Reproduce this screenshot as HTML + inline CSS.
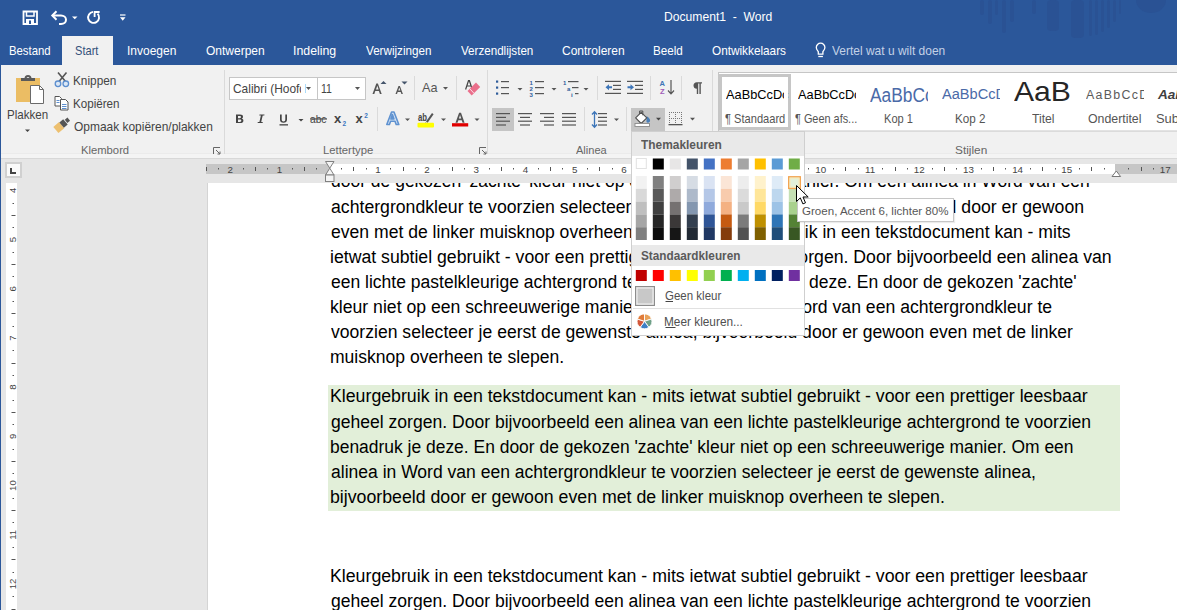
<!DOCTYPE html>
<html><head><meta charset="utf-8"><title>Document1 - Word</title><style>
*{margin:0;padding:0;box-sizing:border-box}
html,body{width:1177px;height:610px;overflow:hidden;background:#e6e6e6;font-family:"Liberation Sans",sans-serif;position:relative}
.a{position:absolute}
.t{position:absolute;white-space:pre;transform-origin:0 0;font-family:"Liberation Sans",sans-serif}
svg{position:absolute;overflow:visible}
.sw{position:absolute;width:11px;height:11px}
.sh{position:absolute;width:11px}
</style></head><body>
<!-- document area -->
<div class="a" style="left:0;top:159px;width:1177px;height:451px;background:#e6e6e6"></div>
<div class="a" style="left:208px;top:183px;width:969px;height:427px;background:#ffffff"></div>
<div class="a" style="left:207px;top:183px;width:1px;height:427px;background:#d4d4d4"></div>
<div class="a" style="left:328px;top:385px;width:792px;height:126px;background:#e2efd9"></div>
<div class="t" style="left:330.70px;top:173.44px;font-size:17.6px;line-height:17.6px;color:#000000;font-weight:normal;transform:scaleX(0.9940)">door de gekozen 'zachte' kleur niet op een schreeuwerige manier. Om een alinea in Word van een</div>
<div class="t" style="left:330.70px;top:198.54px;font-size:17.6px;line-height:17.6px;color:#000000;font-weight:normal;transform:scaleX(1.0039)">achtergrondkleur te voorzien selecteer je eerst de gewenste alinea, bijvoorbeeld door er gewoon</div>
<div class="t" style="left:330.70px;top:223.64px;font-size:17.6px;line-height:17.6px;color:#000000;font-weight:normal;transform:scaleX(0.9990)">even met de linker muisknop overheen te slepen. Kleurgebruik in een tekstdocument kan - mits</div>
<div class="t" style="left:329.70px;top:248.74px;font-size:17.6px;line-height:17.6px;color:#000000;font-weight:normal;transform:scaleX(1.0040)">ietwat subtiel gebruikt - voor een prettiger leesbaar geheel zorgen. Door bijvoorbeeld een alinea van</div>
<div class="t" style="left:330.70px;top:273.84px;font-size:17.6px;line-height:17.6px;color:#000000;font-weight:normal;transform:scaleX(0.9954)">een lichte pastelkleurige achtergrond te voorzien benadruk je deze. En door de gekozen 'zachte'</div>
<div class="t" style="left:329.70px;top:298.94px;font-size:17.6px;line-height:17.6px;color:#000000;font-weight:normal;transform:scaleX(1.0023)">kleur niet op een schreeuwerige manier. Om een alinea in Word van een achtergrondkleur te</div>
<div class="t" style="left:330.70px;top:324.04px;font-size:17.6px;line-height:17.6px;color:#000000;font-weight:normal;transform:scaleX(0.9994)">voorzien selecteer je eerst de gewenste alinea, bijvoorbeeld door er gewoon even met de linker</div>
<div class="t" style="left:329.70px;top:349.14px;font-size:17.6px;line-height:17.6px;color:#000000;font-weight:normal;transform:scaleX(0.9972)">muisknop overheen te slepen.</div>
<div class="t" style="left:329.69px;top:388.44px;font-size:17.6px;line-height:17.6px;color:#000000;font-weight:normal;transform:scaleX(1.0075)">Kleurgebruik in een tekstdocument kan - mits ietwat subtiel gebruikt - voor een prettiger leesbaar</div>
<div class="t" style="left:330.70px;top:413.54px;font-size:17.6px;line-height:17.6px;color:#000000;font-weight:normal;transform:scaleX(0.9976)">geheel zorgen. Door bijvoorbeeld een alinea van een lichte pastelkleurige achtergrond te voorzien</div>
<div class="t" style="left:329.71px;top:438.64px;font-size:17.6px;line-height:17.6px;color:#000000;font-weight:normal;transform:scaleX(0.9913)">benadruk je deze. En door de gekozen 'zachte' kleur niet op een schreeuwerige manier. Om een</div>
<div class="t" style="left:330.70px;top:463.74px;font-size:17.6px;line-height:17.6px;color:#000000;font-weight:normal;transform:scaleX(0.9959)">alinea in Word van een achtergrondkleur te voorzien selecteer je eerst de gewenste alinea,</div>
<div class="t" style="left:329.69px;top:488.84px;font-size:17.6px;line-height:17.6px;color:#000000;font-weight:normal;transform:scaleX(1.0074)">bijvoorbeeld door er gewoon even met de linker muisknop overheen te slepen.</div>
<div class="t" style="left:329.69px;top:567.54px;font-size:17.6px;line-height:17.6px;color:#000000;font-weight:normal;transform:scaleX(1.0075)">Kleurgebruik in een tekstdocument kan - mits ietwat subtiel gebruikt - voor een prettiger leesbaar</div>
<div class="t" style="left:330.70px;top:592.64px;font-size:17.6px;line-height:17.6px;color:#000000;font-weight:normal;transform:scaleX(0.9976)">geheel zorgen. Door bijvoorbeeld een alinea van een lichte pastelkleurige achtergrond te voorzien</div>
<!-- horizontal ruler -->
<div class="a" style="left:2px;top:159px;width:1175px;height:24px;background:#e6e6e6"></div>
<div class="a" style="left:206px;top:164px;width:971px;height:10px;background:#c6c6c6"></div>
<div class="a" style="left:330px;top:164px;width:785px;height:10px;background:#ffffff"></div>
<svg style="left:0;top:155px" width="1177" height="30" viewBox="0 155 1177 30">
<rect x="206" y="167" width="1" height="4" fill="#555555"/>
<rect x="218" y="168" width="1" height="1.5" fill="#555555"/>
<rect x="243" y="168" width="1" height="1.5" fill="#555555"/>
<rect x="255" y="167" width="1" height="4" fill="#555555"/>
<rect x="267" y="168" width="1" height="1.5" fill="#555555"/>
<rect x="292" y="168" width="1" height="1.5" fill="#555555"/>
<rect x="304" y="167" width="1" height="4" fill="#555555"/>
<rect x="316" y="168" width="1" height="1.5" fill="#555555"/>
<rect x="341" y="168" width="1" height="1.5" fill="#555555"/>
<rect x="353" y="167" width="1" height="4" fill="#555555"/>
<rect x="366" y="168" width="1" height="1.5" fill="#555555"/>
<rect x="390" y="168" width="1" height="1.5" fill="#555555"/>
<rect x="403" y="167" width="1" height="4" fill="#555555"/>
<rect x="415" y="168" width="1" height="1.5" fill="#555555"/>
<rect x="439" y="168" width="1" height="1.5" fill="#555555"/>
<rect x="452" y="167" width="1" height="4" fill="#555555"/>
<rect x="464" y="168" width="1" height="1.5" fill="#555555"/>
<rect x="489" y="168" width="1" height="1.5" fill="#555555"/>
<rect x="501" y="167" width="1" height="4" fill="#555555"/>
<rect x="513" y="168" width="1" height="1.5" fill="#555555"/>
<rect x="538" y="168" width="1" height="1.5" fill="#555555"/>
<rect x="550" y="167" width="1" height="4" fill="#555555"/>
<rect x="562" y="168" width="1" height="1.5" fill="#555555"/>
<rect x="587" y="168" width="1" height="1.5" fill="#555555"/>
<rect x="599" y="167" width="1" height="4" fill="#555555"/>
<rect x="612" y="168" width="1" height="1.5" fill="#555555"/>
<rect x="636" y="168" width="1" height="1.5" fill="#555555"/>
<rect x="649" y="167" width="1" height="4" fill="#555555"/>
<rect x="661" y="168" width="1" height="1.5" fill="#555555"/>
<rect x="685" y="168" width="1" height="1.5" fill="#555555"/>
<rect x="698" y="167" width="1" height="4" fill="#555555"/>
<rect x="710" y="168" width="1" height="1.5" fill="#555555"/>
<rect x="735" y="168" width="1" height="1.5" fill="#555555"/>
<rect x="747" y="167" width="1" height="4" fill="#555555"/>
<rect x="759" y="168" width="1" height="1.5" fill="#555555"/>
<rect x="784" y="168" width="1" height="1.5" fill="#555555"/>
<rect x="796" y="167" width="1" height="4" fill="#555555"/>
<rect x="808" y="168" width="1" height="1.5" fill="#555555"/>
<rect x="833" y="168" width="1" height="1.5" fill="#555555"/>
<rect x="845" y="167" width="1" height="4" fill="#555555"/>
<rect x="858" y="168" width="1" height="1.5" fill="#555555"/>
<rect x="882" y="168" width="1" height="1.5" fill="#555555"/>
<rect x="895" y="167" width="1" height="4" fill="#555555"/>
<rect x="907" y="168" width="1" height="1.5" fill="#555555"/>
<rect x="932" y="168" width="1" height="1.5" fill="#555555"/>
<rect x="944" y="167" width="1" height="4" fill="#555555"/>
<rect x="956" y="168" width="1" height="1.5" fill="#555555"/>
<rect x="981" y="168" width="1" height="1.5" fill="#555555"/>
<rect x="993" y="167" width="1" height="4" fill="#555555"/>
<rect x="1005" y="168" width="1" height="1.5" fill="#555555"/>
<rect x="1030" y="168" width="1" height="1.5" fill="#555555"/>
<rect x="1042" y="167" width="1" height="4" fill="#555555"/>
<rect x="1055" y="168" width="1" height="1.5" fill="#555555"/>
<rect x="1079" y="168" width="1" height="1.5" fill="#555555"/>
<rect x="1091" y="167" width="1" height="4" fill="#555555"/>
<rect x="1104" y="168" width="1" height="1.5" fill="#555555"/>
<rect x="1128" y="168" width="1" height="1.5" fill="#555555"/>
<rect x="1141" y="167" width="1" height="4" fill="#555555"/>
<rect x="1153" y="168" width="1" height="1.5" fill="#555555"/>
<text x="230.3" y="172.9" font-size="9.8" fill="#444" text-anchor="middle" font-family="Liberation Sans">2</text>
<text x="279.5" y="172.9" font-size="9.8" fill="#444" text-anchor="middle" font-family="Liberation Sans">1</text>
<text x="377.9" y="172.9" font-size="9.8" fill="#444" text-anchor="middle" font-family="Liberation Sans">1</text>
<text x="427.1" y="172.9" font-size="9.8" fill="#444" text-anchor="middle" font-family="Liberation Sans">2</text>
<text x="476.3" y="172.9" font-size="9.8" fill="#444" text-anchor="middle" font-family="Liberation Sans">3</text>
<text x="525.5" y="172.9" font-size="9.8" fill="#444" text-anchor="middle" font-family="Liberation Sans">4</text>
<text x="574.8" y="172.9" font-size="9.8" fill="#444" text-anchor="middle" font-family="Liberation Sans">5</text>
<text x="624.0" y="172.9" font-size="9.8" fill="#444" text-anchor="middle" font-family="Liberation Sans">6</text>
<text x="673.2" y="172.9" font-size="9.8" fill="#444" text-anchor="middle" font-family="Liberation Sans">7</text>
<text x="722.4" y="172.9" font-size="9.8" fill="#444" text-anchor="middle" font-family="Liberation Sans">8</text>
<text x="771.6" y="172.9" font-size="9.8" fill="#444" text-anchor="middle" font-family="Liberation Sans">9</text>
<text x="820.8" y="172.9" font-size="9.8" fill="#444" text-anchor="middle" font-family="Liberation Sans">10</text>
<text x="870.0" y="172.9" font-size="9.8" fill="#444" text-anchor="middle" font-family="Liberation Sans">11</text>
<text x="919.2" y="172.9" font-size="9.8" fill="#444" text-anchor="middle" font-family="Liberation Sans">12</text>
<text x="968.4" y="172.9" font-size="9.8" fill="#444" text-anchor="middle" font-family="Liberation Sans">13</text>
<text x="1017.6" y="172.9" font-size="9.8" fill="#444" text-anchor="middle" font-family="Liberation Sans">14</text>
<text x="1066.8" y="172.9" font-size="9.8" fill="#444" text-anchor="middle" font-family="Liberation Sans">15</text>
<text x="1165.3" y="172.9" font-size="9.8" fill="#444" text-anchor="middle" font-family="Liberation Sans">17</text>
<path d="M325.5 161.5h8.5l-4.25 6.7l4.25 6.8h-8.5l4.25-6.8z" fill="#f4f4f4" stroke="#808080" stroke-width="1"/>
<rect x="325.5" y="175" width="8.5" height="6.5" fill="#f4f4f4" stroke="#808080" stroke-width="1"/>
<path d="M1112 176.5l4.3-5.5l4.3 5.5z" fill="#fff" stroke="#777" stroke-width="1"/>
</svg>
<!-- vertical ruler -->
<div class="a" style="left:2px;top:159px;width:20px;height:451px;background:#e6e6e6"></div>
<div class="a" style="left:6px;top:183px;width:11px;height:427px;background:#ffffff"></div>
<div class="a" style="left:5px;top:162px;width:17px;height:16px;background:#d0d0d0"></div>
<div class="a" style="left:7px;top:164px;width:13px;height:12px;background:#fafafa"></div>
<div class="a" style="left:10px;top:168px;width:2px;height:6px;background:#444"></div>
<div class="a" style="left:10px;top:172px;width:6px;height:2px;background:#444"></div>
<svg style="left:0;top:180px" width="30" height="430" viewBox="0 180 30 430">
<rect x="12.5" y="203" width="1.5" height="1" fill="#555555"/>
<rect x="11.5" y="215" width="4" height="1" fill="#555555"/>
<rect x="12.5" y="227" width="1.5" height="1" fill="#555555"/>
<rect x="12.5" y="252" width="1.5" height="1" fill="#555555"/>
<rect x="11.5" y="264" width="4" height="1" fill="#555555"/>
<rect x="12.5" y="276" width="1.5" height="1" fill="#555555"/>
<rect x="12.5" y="301" width="1.5" height="1" fill="#555555"/>
<rect x="11.5" y="313" width="4" height="1" fill="#555555"/>
<rect x="12.5" y="326" width="1.5" height="1" fill="#555555"/>
<rect x="12.5" y="350" width="1.5" height="1" fill="#555555"/>
<rect x="11.5" y="363" width="4" height="1" fill="#555555"/>
<rect x="12.5" y="375" width="1.5" height="1" fill="#555555"/>
<rect x="12.5" y="400" width="1.5" height="1" fill="#555555"/>
<rect x="11.5" y="412" width="4" height="1" fill="#555555"/>
<rect x="12.5" y="424" width="1.5" height="1" fill="#555555"/>
<rect x="12.5" y="449" width="1.5" height="1" fill="#555555"/>
<rect x="11.5" y="461" width="4" height="1" fill="#555555"/>
<rect x="12.5" y="473" width="1.5" height="1" fill="#555555"/>
<rect x="12.5" y="498" width="1.5" height="1" fill="#555555"/>
<rect x="11.5" y="510" width="4" height="1" fill="#555555"/>
<rect x="12.5" y="522" width="1.5" height="1" fill="#555555"/>
<rect x="12.5" y="547" width="1.5" height="1" fill="#555555"/>
<rect x="11.5" y="559" width="4" height="1" fill="#555555"/>
<rect x="12.5" y="572" width="1.5" height="1" fill="#555555"/>
<rect x="12.5" y="596" width="1.5" height="1" fill="#555555"/>
<rect x="11.5" y="609" width="4" height="1" fill="#555555"/>
<rect x="12.5" y="621" width="1.5" height="1" fill="#555555"/>
<text transform="translate(16.2 190.4) rotate(-90)" x="0" y="0" font-size="9.6" fill="#444" text-anchor="middle" font-family="Liberation Sans">4</text>
<text transform="translate(16.2 239.6) rotate(-90)" x="0" y="0" font-size="9.6" fill="#444" text-anchor="middle" font-family="Liberation Sans">5</text>
<text transform="translate(16.2 288.8) rotate(-90)" x="0" y="0" font-size="9.6" fill="#444" text-anchor="middle" font-family="Liberation Sans">6</text>
<text transform="translate(16.2 338.0) rotate(-90)" x="0" y="0" font-size="9.6" fill="#444" text-anchor="middle" font-family="Liberation Sans">7</text>
<text transform="translate(16.2 387.2) rotate(-90)" x="0" y="0" font-size="9.6" fill="#444" text-anchor="middle" font-family="Liberation Sans">8</text>
<text transform="translate(16.2 436.4) rotate(-90)" x="0" y="0" font-size="9.6" fill="#444" text-anchor="middle" font-family="Liberation Sans">9</text>
<text transform="translate(16.2 485.6) rotate(-90)" x="0" y="0" font-size="9.6" fill="#444" text-anchor="middle" font-family="Liberation Sans">10</text>
<text transform="translate(16.2 534.8) rotate(-90)" x="0" y="0" font-size="9.6" fill="#444" text-anchor="middle" font-family="Liberation Sans">11</text>
<text transform="translate(16.2 584.0) rotate(-90)" x="0" y="0" font-size="9.6" fill="#444" text-anchor="middle" font-family="Liberation Sans">12</text>
</svg>
<!-- title bar + tabs -->
<div class="a" style="left:0;top:0;width:1177px;height:66px;background:#2b579a"></div>
<svg style="left:0;top:0" width="1177" height="40" viewBox="0 0 1177 40">
<g fill="#2a5294">
 <rect x="980" y="0" width="4" height="15" rx="2"/>
 <rect x="988" y="0" width="4" height="24" rx="2"/>
 <rect x="995" y="0" width="3" height="15" rx="1.5"/>
 <rect x="1002" y="0" width="4" height="33" rx="2"/>
 <rect x="1010" y="0" width="4" height="22" rx="2"/>
 <rect x="1032" y="0" width="4" height="14" rx="2"/>
 <rect x="1047" y="0" width="12" height="31" rx="4"/>
 <rect x="1071" y="0" width="13" height="38" rx="4"/>
 <rect x="1089" y="0" width="3" height="36" rx="1.5"/>
 <rect x="1095" y="0" width="3" height="35" rx="1.5"/>
 <rect x="1101" y="0" width="3" height="32" rx="1.5"/>
 <rect x="1107" y="0" width="3" height="28" rx="1.5"/>
 <rect x="1113" y="0" width="3" height="22" rx="1.5"/>
 <rect x="1119" y="0" width="2" height="14" rx="1"/>
 <path d="M1136 0a15 13 0 0 0 30 0z"/>
</g>
</svg>

<!-- ribbon -->
<div class="a" style="left:1px;top:65px;width:1176px;height:93px;background:#f1f1f1"></div>
<div class="a" style="left:1px;top:153px;width:1176px;height:1px;background:#ebebeb"></div>
<div class="a" style="left:1px;top:154px;width:1176px;height:4px;background:#f4f4f4"></div>
<div class="a" style="left:1px;top:158px;width:1176px;height:1px;background:#d8d8d8"></div>
<div class="a" style="left:62px;top:36px;width:51px;height:30px;background:#f1f1f1"></div>
<!-- left window border -->
<div class="a" style="left:0;top:0;width:1px;height:610px;background:#2b579a"></div>
<svg style="left:0;top:0" width="1177" height="160" viewBox="0 0 1177 160">
<!-- QAT -->
<g fill="none" stroke="#fff">
 <path d="M23.5 11.5h13.5v12.5h-13.5z" stroke-width="1.8"/>
 <path d="M26.5 11.5v4.5h7.5v-4.5" stroke-width="1.5"/>
 <path d="M52.5 15.5h8.5c3 0 5 2 5 4.3c0 2.3-2 4.2-5 4.2h-2" stroke-width="2"/>
 <path d="M56.5 11.3l-4.2 4.2l4.2 4.2" stroke-width="2"/>
 <path d="M97.6 13.6a5.5 5.5 0 1 1 -4.6 -1.7" stroke-width="1.9"/>
 <path d="M94.6 17V12h5" stroke-width="1.8"/>
 <path d="M120 15h5.5" stroke-width="1.2"/>
 <path d="M816.3 47.5a4.3 4.3 0 1 1 8.6 0c0 2-1.2 3-2 4.2v2.5h-4.6v-2.5c-0.8-1.2-2-2.2-2-4.2z" stroke-width="1.3"/>
 <path d="M818.3 56.5h4.6" stroke-width="1.3"/>
</g>
<g fill="#fff">
 <path d="M26 19h8v5h-8z"/>
 
 <path d="M72 16.5h5.5l-2.75 2.8z"/>
 <path d="M120 17.3h5.5l-2.75 3.5z"/>
</g>
<path d="M29 20.5h2v3.5h-2z" fill="#2b579a"/>
<!-- Clipboard / Plakken -->
<path d="M16 78h24v24h-24z" fill="#ebbd64"/>
<path d="M21 78h14v3h-14z" fill="#5a5a5a"/>
<path d="M25.5 78.5a2.5 2.5 0 0 1 5 0" fill="none" stroke="#5a5a5a" stroke-width="2"/>
<path d="M30.5 85.5h9l4 4v14h-13z" fill="#fff" stroke="#6a6a6a" stroke-width="1"/>
<path d="M39.5 85.5v4h4" fill="none" stroke="#6a6a6a" stroke-width="1"/>
<path d="M25 129.5h5l-2.5 2.5z" fill="#444"/>
<!-- scissors -->
<path d="M58 72.5l7.5 9M66.5 72.5l-7.5 9" stroke="#555" stroke-width="1.6" fill="none"/>
<circle cx="58" cy="83.8" r="2.8" fill="#dbe7f5" stroke="#5d8fcf" stroke-width="1.3"/>
<circle cx="65.8" cy="83.8" r="2.8" fill="#dbe7f5" stroke="#5d8fcf" stroke-width="1.3"/>
<!-- copy -->
<path d="M55 96.5h4.5l2 2v7.5h-6.5z" fill="#fff" stroke="#555" stroke-width="1"/>
<path d="M60.5 99.5h5l2.5 2.5v8h-7.5z" fill="#fff" stroke="#555" stroke-width="1"/>
<path d="M56.5 100.5h3M56.5 102.5h3M62 104.5h4.5M62 106.5h4.5M62 108.5h4.5" stroke="#5d8fcf" stroke-width="1"/>
<!-- brush -->
<g transform="rotate(-40 62 124.8)">
 <rect x="54" y="120.8" width="7.5" height="8" fill="#edc070"/>
 <rect x="61.5" y="121.3" width="5" height="7" fill="#555"/>
 <rect x="67.3" y="122.8" width="3.5" height="4" fill="#555"/>
</g>
<!-- group separators -->
<g fill="#dadada">
 <rect x="224" y="70" width="1" height="84"/>
 <rect x="487" y="70" width="1" height="84"/>
 <rect x="712" y="70" width="1" height="84"/>
 <rect x="414" y="76" width="1" height="24"/>
 <rect x="456" y="76" width="1" height="24"/>
 <rect x="377" y="107" width="1" height="24"/>
 <rect x="597" y="76" width="1" height="24"/>
 <rect x="650" y="76" width="1" height="24"/>
 <rect x="681" y="76" width="1" height="24"/>
 <rect x="584" y="107" width="1" height="24"/>
 <rect x="626" y="107" width="1" height="24"/>
</g>
<!-- dialog launchers -->
<g fill="none" stroke="#666" stroke-width="1">
 <path d="M213.5 154v-6.5h6.5M216 150l4 4M220 151.5v2.5h-2.5"/>
 <path d="M479.5 154v-6.5h6.5M482 150l4 4M486 151.5v2.5h-2.5"/>
 <path d="M704.5 154v-6.5h6.5M707 150l4 4M711 151.5v2.5h-2.5"/>
</g>
<!-- font name / size boxes -->
<rect x="229.5" y="77.5" width="88" height="22" fill="#fff" stroke="#c6c6c6"/>
<rect x="317.5" y="77.5" width="48" height="22" fill="#fff" stroke="#c6c6c6"/>
<g fill="#555">
 <path d="M306 87h5l-2.5 3z"/>
 <path d="M355 87h5l-2.5 3z"/>
</g>
<!-- styles gallery -->
<rect x="718.5" y="72.5" width="470" height="58.5" fill="#fff" stroke="#c6c6c6"/>
<rect x="720.5" y="75.5" width="69" height="53" fill="none" stroke="#c6c6c6" stroke-width="3"/>
<!-- font grow/shrink -->
<g fill="#555">
 <path d="M372.5 94l3.8-10.5h1.6l3.8 10.5h-1.8l-1-2.9h-3.6l-1 2.9zM376 89.6h2.6l-1.3-3.9z"/>
 <path d="M395.5 94l3-8h1.4l3 8h-1.5l-0.7-2.1h-3l-0.7 2.1zM398.3 90.6h2l-1-3z"/>
</g>
<g fill="#44546a">
 <path d="M380.5 84h6l-3-3z"/>
 <path d="M401.5 81.5h6l-3 3z"/>
</g>
<!-- Aa -->
<text x="422" y="92.4" font-family="Liberation Sans" font-size="12.8" fill="#555" textLength="15.5" lengthAdjust="spacingAndGlyphs">Aa</text>
<path d="M443 87h5l-2.5 2.8z" fill="#555"/>
<!-- clear formatting -->
<path d="M465.6 89.5l2.9-8.8h0.9l2.9 8.8M467 86h4" fill="none" stroke="#444" stroke-width="1.2"/>
<path d="M476 82.5l4.2 4.5l-8.5 8.5l-4.2-4.5z" fill="#ea6f8b"/>
<path d="M467.8 90.8l4 4.3" stroke="#f2f2f2" stroke-width="0" />
<path d="M469.8 88.8l4.2 4.5" stroke="#fbe0e6" stroke-width="1"/>
<!-- B I U abc x2 x2 -->
<g fill="#444">
 <path d="M236 114.5h4c2 0 3 0.9 3 2.2c0 1-0.6 1.6-1.4 1.9c1.1 0.2 1.8 1 1.8 2.1c0 1.6-1.2 2.3-3.2 2.3h-4.2zM238 116v2.2h1.6c0.9 0 1.4-0.4 1.4-1.1s-0.5-1.1-1.4-1.1zM238 119.6v2.3h1.8c1 0 1.5-0.4 1.5-1.15s-0.5-1.15-1.5-1.15z"/>
 <path d="M259.5 114.5h5l-0.2 1h-1.6l-1.5 6.5h1.6l-0.2 1h-5l0.2-1h1.6l1.5-6.5h-1.6z"/>
 <path d="M280 114.5h1.7v5c0 1.2 0.6 1.9 1.8 1.9s1.8-0.7 1.8-1.9v-5h1.7v5c0 2.2-1.3 3.3-3.5 3.3s-3.5-1.1-3.5-3.3z"/>
 <rect x="279.5" y="124.2" width="8.5" height="1.3"/>
 <path d="M298.5 119h5l-2.5 2.5z"/>
 
 
</g>
<text x="310" y="122.5" font-family="Liberation Sans" font-size="11" fill="#444" textLength="16.5" lengthAdjust="spacingAndGlyphs">abc</text>
<rect x="310" y="118.3" width="17" height="1.3" fill="#555"/>
<text x="334" y="123" font-family="Liberation Sans" font-size="13" fill="#444" font-weight="bold">x</text><text x="342.6" y="125.5" font-family="Liberation Sans" font-size="6.5" fill="#3b75c0" font-weight="bold">2</text>
<text x="355.5" y="123" font-family="Liberation Sans" font-size="13" fill="#444" font-weight="bold">x</text><text x="364.2" y="117.5" font-family="Liberation Sans" font-size="6.5" fill="#3b75c0" font-weight="bold">2</text>
<!-- text effects A -->
<path d="M386.8 124.5l4.8-12.5h2.4l4.8 12.5h-2.6l-1.2-3.3h-4.4l-1.2 3.3zM390.9 118.9h3l-1.5-4.4z" fill="#d6e4f5" stroke="#5f92d0" stroke-width="1.6" stroke-linejoin="round"/>
<path d="M405 118.5h5l-2.5 2.5z" fill="#555"/>
<!-- highlighter -->
<text x="418" y="120.5" font-family="Liberation Sans" font-size="10" font-weight="bold" fill="#444" textLength="9" lengthAdjust="spacingAndGlyphs">ab</text>
<path d="M426 121.5l6-8.5l1.6 1.2l-6 8.5z" fill="#555"/>
<path d="M425.5 122.2l1.8 1.3l-2.4 0.7z" fill="#555"/>
<rect x="417.5" y="122.7" width="16.5" height="4.8" rx="1" fill="#ffff00"/>
<path d="M441 118.5h5l-2.5 2.5z" fill="#555"/>
<!-- font color -->
<path d="M455.5 122.8l3.6-10h1.9l3.6 10h-2l-0.9-2.6h-3.3l-0.9 2.6zM458.9 118.6h2.3l-1.15-3.5z" fill="#555"/>
<rect x="452" y="123.2" width="16.2" height="3.3" fill="#e00000"/>
<path d="M474.5 118.5h5l-2.5 2.5z" fill="#555"/>
<!-- paragraph row 1 -->
<g fill="#2e5c9a">
 <rect x="496" y="80.5" width="2.2" height="2.2"/><rect x="496" y="86.5" width="2.2" height="2.2"/><rect x="496" y="92.5" width="2.2" height="2.2"/>
</g>
<g fill="#555">
 <rect x="501" y="81" width="8" height="1.2"/><rect x="501" y="87" width="8" height="1.2"/><rect x="501" y="93" width="8" height="1.2"/>
 <path d="M517.5 88h5l-2.5 2.5z"/>
 <rect x="535" y="81" width="9" height="1.2"/><rect x="535" y="87" width="9" height="1.2"/><rect x="535" y="93" width="9" height="1.2"/>
 <path d="M551.5 88h5l-2.5 2.5z"/>
 <rect x="568" y="81" width="10.5" height="1.2"/><rect x="572" y="87" width="6.5" height="1.2"/><rect x="575" y="93" width="3.5" height="1.2"/>
 <path d="M583.5 88h5l-2.5 2.5z"/>
</g>
<g font-family="Liberation Sans" font-size="6" font-weight="bold" fill="#2e5c9a">
 <text x="529.5" y="84.5">1</text><text x="529.5" y="90.5">2</text><text x="529.5" y="96.5">3</text>
 <text x="563" y="84.5">1</text><text x="567" y="90.5">a</text><text x="571" y="96.5">i</text>
</g>
<!-- indent -->
<g fill="#555">
 <rect x="605" y="80.8" width="16" height="1.2"/><rect x="613" y="84.8" width="8" height="1.2"/><rect x="613" y="88.8" width="8" height="1.2"/><rect x="605" y="92.8" width="16" height="1.2"/>
 <rect x="627" y="80.8" width="16" height="1.2"/><rect x="635" y="84.8" width="8" height="1.2"/><rect x="635" y="88.8" width="8" height="1.2"/><rect x="627" y="92.8" width="16" height="1.2"/>
</g>
<g fill="#3d75b8">
 <path d="M605.5 87.3l3.5-3v2h3v2h-3v2z"/>
 <path d="M634 87.3l-3.5-3v2h-3v2h3v2z"/>
</g>
<!-- sort -->
<text x="659.5" y="86.2" font-family="Liberation Sans" font-size="7.5" font-weight="bold" fill="#3d75b8">A</text>
<text x="660" y="94.3" font-family="Liberation Sans" font-size="7.5" font-weight="bold" fill="#a05bb8">Z</text>
<path d="M671 80v13.5M668 90.5l3 3.3l3-3.3" fill="none" stroke="#555" stroke-width="1.2"/>
<!-- pilcrow -->
<path d="M696 82.2h6v1.3h-1.2v10.5h-1.4v-10.5h-1.2v10.5h-1.4v-5.2c-2 0-3.3-1.3-3.3-3.3s1.3-3.3 3.3-3.3z" fill="#555"/>
<!-- paragraph row 2 -->
<rect x="492" y="108" width="22" height="23" fill="#c5c5c5"/>
<g fill="#555">
 <rect x="496" y="113" width="14" height="1.2"/><rect x="496" y="116.8" width="10" height="1.2"/><rect x="496" y="120.6" width="14" height="1.2"/><rect x="496" y="124.4" width="10" height="1.2"/>
 <rect x="518" y="113" width="14" height="1.2"/><rect x="520" y="116.8" width="10" height="1.2"/><rect x="518" y="120.6" width="14" height="1.2"/><rect x="520" y="124.4" width="10" height="1.2"/>
 <rect x="540" y="113" width="14" height="1.2"/><rect x="544" y="116.8" width="10" height="1.2"/><rect x="540" y="120.6" width="14" height="1.2"/><rect x="544" y="124.4" width="10" height="1.2"/>
 <rect x="562" y="113" width="14" height="1.2"/><rect x="562" y="116.8" width="14" height="1.2"/><rect x="562" y="120.6" width="14" height="1.2"/><rect x="562" y="124.4" width="14" height="1.2"/>
 <rect x="598" y="113" width="9" height="1.2"/><rect x="598" y="116.8" width="9" height="1.2"/><rect x="598" y="120.6" width="9" height="1.2"/><rect x="598" y="124.4" width="9" height="1.2"/>
 <path d="M614 118.5h5l-2.5 2.5z"/>
</g>
<path d="M594.5 112v15M592 114.5l2.5-2.8l2.5 2.8M592 124.5l2.5 2.8l2.5-2.8" fill="none" stroke="#3d75b8" stroke-width="1.3"/>
<!-- shading button -->
<rect x="631" y="108" width="34" height="24" fill="#c5c5c5"/>
<path d="M646.5 116.2c2.2 1 3.6 2.6 3.6 4.3c0 1.3-1 2.2-2.2 2.2c-0.6 0-1-0.3-1.4-0.6z" fill="#4a7fb8"/>
<path d="M641.2 112.3l5.6 5.6l-5.6 5.6l-5.6-5.6z" fill="#fff" stroke="#505050" stroke-width="1.1" stroke-linejoin="round"/>
<path d="M639.6 114v-3h3.2v4.3" fill="none" stroke="#505050" stroke-width="1"/>
<rect x="635" y="123.5" width="14.5" height="3" fill="#fff" stroke="#8a8a8a" stroke-width="0.9"/>
<path d="M656 117.8h5l-2.5 2.8z" fill="#444"/>
<!-- borders -->
<g fill="#777">
<rect x="669" y="112" width="1" height="1"/><rect x="669" y="118" width="1" height="1"/><rect x="671" y="112" width="1" height="1"/><rect x="671" y="118" width="1" height="1"/><rect x="673" y="112" width="1" height="1"/><rect x="673" y="118" width="1" height="1"/><rect x="675" y="112" width="1" height="1"/><rect x="675" y="118" width="1" height="1"/><rect x="677" y="112" width="1" height="1"/><rect x="677" y="118" width="1" height="1"/><rect x="679" y="112" width="1" height="1"/><rect x="679" y="118" width="1" height="1"/><rect x="681" y="112" width="1" height="1"/><rect x="681" y="118" width="1" height="1"/><rect x="669" y="112" width="1" height="1"/><rect x="675" y="112" width="1" height="1"/><rect x="681" y="112" width="1" height="1"/><rect x="669" y="114" width="1" height="1"/><rect x="675" y="114" width="1" height="1"/><rect x="681" y="114" width="1" height="1"/><rect x="669" y="116" width="1" height="1"/><rect x="675" y="116" width="1" height="1"/><rect x="681" y="116" width="1" height="1"/><rect x="669" y="118" width="1" height="1"/><rect x="675" y="118" width="1" height="1"/><rect x="681" y="118" width="1" height="1"/><rect x="669" y="120" width="1" height="1"/><rect x="675" y="120" width="1" height="1"/><rect x="681" y="120" width="1" height="1"/><rect x="669" y="122" width="1" height="1"/><rect x="675" y="122" width="1" height="1"/><rect x="681" y="122" width="1" height="1"/>
</g>
<rect x="668.5" y="124" width="14" height="1.3" fill="#555"/>
<path d="M690 117.8h5l-2.5 2.8z" fill="#555"/>
</svg>

<div class="t" style="left:664.14px;top:11.09px;font-size:12.6px;line-height:12.6px;color:#ffffff;font-weight:normal;transform:scaleX(0.9637)">Document1  -  Word</div>
<div class="t" style="left:8.78px;top:44.86px;font-size:12.4px;line-height:12.4px;color:#ffffff;font-weight:normal;transform:scaleX(0.9153)">Bestand</div>
<div class="t" style="left:75.00px;top:44.86px;font-size:12.4px;line-height:12.4px;color:#33507a;font-weight:normal;transform:scaleX(0.8943)">Start</div>
<div class="t" style="left:127.03px;top:44.86px;font-size:12.4px;line-height:12.4px;color:#ffffff;font-weight:normal;transform:scaleX(0.9682)">Invoegen</div>
<div class="t" style="left:206.00px;top:44.86px;font-size:12.4px;line-height:12.4px;color:#ffffff;font-weight:normal;transform:scaleX(0.9684)">Ontwerpen</div>
<div class="t" style="left:292.70px;top:44.86px;font-size:12.4px;line-height:12.4px;color:#ffffff;font-weight:normal;transform:scaleX(0.9950)">Indeling</div>
<div class="t" style="left:365.80px;top:44.86px;font-size:12.4px;line-height:12.4px;color:#ffffff;font-weight:normal;transform:scaleX(0.9415)">Verwijzingen</div>
<div class="t" style="left:460.80px;top:44.86px;font-size:12.4px;line-height:12.4px;color:#ffffff;font-weight:normal;transform:scaleX(0.9372)">Verzendlijsten</div>
<div class="t" style="left:561.80px;top:44.86px;font-size:12.4px;line-height:12.4px;color:#ffffff;font-weight:normal;transform:scaleX(0.9684)">Controleren</div>
<div class="t" style="left:652.76px;top:44.86px;font-size:12.4px;line-height:12.4px;color:#ffffff;font-weight:normal;transform:scaleX(0.9416)">Beeld</div>
<div class="t" style="left:712.00px;top:44.86px;font-size:12.4px;line-height:12.4px;color:#ffffff;font-weight:normal;transform:scaleX(0.9508)">Ontwikkelaars</div>
<div class="t" style="left:832.00px;top:44.86px;font-size:12.4px;line-height:12.4px;color:#c3d1e6;font-weight:normal;transform:scaleX(0.9668)">Vertel wat u wilt doen</div>
<div class="t" style="left:6.50px;top:108.62px;font-size:12.8px;line-height:12.8px;color:#444444;font-weight:normal;transform:scaleX(0.9030)">Plakken</div>
<div class="t" style="left:72.88px;top:75.22px;font-size:12.8px;line-height:12.8px;color:#444444;font-weight:normal;transform:scaleX(0.9226)">Knippen</div>
<div class="t" style="left:72.89px;top:98.12px;font-size:12.8px;line-height:12.8px;color:#444444;font-weight:normal;transform:scaleX(0.9080)">Kopiëren</div>
<div class="t" style="left:73.80px;top:121.02px;font-size:12.8px;line-height:12.8px;color:#444444;font-weight:normal;transform:scaleX(0.9337)">Opmaak kopiëren/plakken</div>
<div class="t" style="left:80.60px;top:145.28px;font-size:11.2px;line-height:11.2px;color:#666666;font-weight:normal;transform:scaleX(1.0051)">Klembord</div>
<div class="t" style="left:322.60px;top:145.28px;font-size:11.2px;line-height:11.2px;color:#666666;font-weight:normal;transform:scaleX(1.0095)">Lettertype</div>
<div class="t" style="left:576.00px;top:145.28px;font-size:11.2px;line-height:11.2px;color:#666666;font-weight:normal;transform:scaleX(0.9882)">Alinea</div>
<div class="t" style="left:955.00px;top:145.28px;font-size:11.2px;line-height:11.2px;color:#666666;font-weight:normal;transform:scaleX(1.0579)">Stijlen</div>
<div class="t" style="left:232.90px;top:83.26px;font-size:12.4px;line-height:12.4px;color:#444444;font-weight:normal;transform:scaleX(0.9637)">Calibri (Hoofd</div>
<div class="t" style="left:320.50px;top:82.86px;font-size:12.4px;line-height:12.4px;color:#444444;font-weight:normal;transform:scaleX(0.8481)">11</div>
<div class="t" style="left:725.80px;top:88.79px;font-size:12.6px;line-height:12.6px;color:#000000;font-weight:normal;transform:scaleX(1.0148)">AaBbCcDc</div>
<div class="t" style="left:724.60px;top:112.76px;font-size:12.4px;line-height:12.4px;color:#555555;font-weight:normal;transform:scaleX(0.8963)">¶ Standaard</div>
<div class="t" style="left:797.80px;top:88.79px;font-size:12.6px;line-height:12.6px;color:#000000;font-weight:normal;transform:scaleX(1.0148)">AaBbCcDc</div>
<div class="t" style="left:795.30px;top:112.76px;font-size:12.4px;line-height:12.4px;color:#555555;font-weight:normal;transform:scaleX(0.8795)">¶ Geen afs...</div>
<div class="t" style="left:870.30px;top:85.10px;font-size:20px;line-height:20px;color:#4a6aa8;font-weight:normal;transform:scaleX(0.8682)">AaBbCc</div>
<div class="t" style="left:883.60px;top:112.76px;font-size:12.4px;line-height:12.4px;color:#555555;font-weight:normal;transform:scaleX(0.8955)">Kop 1</div>
<div class="t" style="left:942.10px;top:86.22px;font-size:15.5px;line-height:15.5px;color:#4a6aa8;font-weight:normal;transform:scaleX(0.9416)">AaBbCcD</div>
<div class="t" style="left:955.46px;top:112.76px;font-size:12.4px;line-height:12.4px;color:#555555;font-weight:normal;transform:scaleX(0.9400)">Kop 2</div>
<div class="t" style="left:1014.00px;top:78.12px;font-size:27.5px;line-height:27.5px;color:#262626;font-weight:normal;transform:scaleX(1.0960)">AaB</div>
<div class="t" style="left:1031.80px;top:112.76px;font-size:12.4px;line-height:12.4px;color:#555555;font-weight:normal;transform:scaleX(0.9822)">Titel</div>
<div class="t" style="letter-spacing:1.3px;left:1085.90px;top:88.77px;font-size:12.5px;line-height:12.5px;color:#5a5a5a;font-weight:normal;transform:scaleX(0.9911)">AaBbCcD</div>
<div class="t" style="left:1088.30px;top:112.76px;font-size:12.4px;line-height:12.4px;color:#555555;font-weight:normal;transform:scaleX(0.9950)">Ondertitel</div>
<div class="t" style="font-style:italic;left:1158.30px;top:88.35px;font-size:13px;line-height:13px;color:#404040;font-weight:bold;transform:scaleX(1.0422)">AaB</div>
<div class="t" style="left:1156.20px;top:112.76px;font-size:12.4px;line-height:12.4px;color:#555555;font-weight:normal;transform:scaleX(1.0426)">Subtiele</div>
<div class="a" style="left:1008px;top:73px;width:70px;height:8.5px;background:#fff"></div>
<div class="a" style="left:784px;top:80px;width:4px;height:24px;background:#fff"></div>
<div class="a" style="left:301px;top:79px;width:4px;height:19px;background:#fff"></div>
<div class="a" style="left:856px;top:80px;width:8px;height:24px;background:#fff"></div>
<div class="a" style="left:928px;top:80px;width:8px;height:24px;background:#fff"></div>
<div class="a" style="left:1000px;top:80px;width:8px;height:24px;background:#fff"></div>
<div class="a" style="left:1144px;top:80px;width:8px;height:24px;background:#fff"></div>
<div class="a" style="left:631px;top:131px;width:174px;height:205px;background:#fff;border:1px solid #cfcfcf"></div>
<div class="a" style="left:632px;top:132px;width:172px;height:24px;background:#e9e9e9"></div>
<div class="a" style="left:632px;top:245px;width:172px;height:21px;background:#e9e9e9"></div>
<svg style="left:0;top:0" width="1177" height="610" viewBox="0 0 1177 610">
<rect x="636.3" y="158.5" width="10" height="10" fill="#FFFFFF" stroke="#e2e2e2"/>
<rect x="635.8" y="176.0" width="11" height="12.8" fill="#F2F2F2"/>
<rect x="635.8" y="188.8" width="11" height="12.8" fill="#D9D9D9"/>
<rect x="635.8" y="201.6" width="11" height="12.8" fill="#BFBFBF"/>
<rect x="635.8" y="214.4" width="11" height="12.8" fill="#A6A6A6"/>
<rect x="635.8" y="227.2" width="11" height="12.8" fill="#808080"/>
<rect x="652.8" y="158.5" width="11" height="11" fill="#000000"/>
<rect x="652.8" y="176.0" width="11" height="12.8" fill="#808080"/>
<rect x="652.8" y="188.8" width="11" height="12.8" fill="#595959"/>
<rect x="652.8" y="201.6" width="11" height="12.8" fill="#404040"/>
<rect x="652.8" y="214.4" width="11" height="12.8" fill="#262626"/>
<rect x="652.8" y="227.2" width="11" height="12.8" fill="#0D0D0D"/>
<rect x="669.8" y="158.5" width="11" height="11" fill="#E7E6E6"/>
<rect x="669.8" y="176.0" width="11" height="12.8" fill="#D0CECE"/>
<rect x="669.8" y="188.8" width="11" height="12.8" fill="#AEAAAA"/>
<rect x="669.8" y="201.6" width="11" height="12.8" fill="#757171"/>
<rect x="669.8" y="214.4" width="11" height="12.8" fill="#3B3838"/>
<rect x="669.8" y="227.2" width="11" height="12.8" fill="#161616"/>
<rect x="686.8" y="158.5" width="11" height="11" fill="#44546A"/>
<rect x="686.8" y="176.0" width="11" height="12.8" fill="#D6DCE4"/>
<rect x="686.8" y="188.8" width="11" height="12.8" fill="#ADB9CA"/>
<rect x="686.8" y="201.6" width="11" height="12.8" fill="#8497B0"/>
<rect x="686.8" y="214.4" width="11" height="12.8" fill="#333F4F"/>
<rect x="686.8" y="227.2" width="11" height="12.8" fill="#222A35"/>
<rect x="703.8" y="158.5" width="11" height="11" fill="#4472C4"/>
<rect x="703.8" y="176.0" width="11" height="12.8" fill="#DAE3F3"/>
<rect x="703.8" y="188.8" width="11" height="12.8" fill="#B4C7E7"/>
<rect x="703.8" y="201.6" width="11" height="12.8" fill="#8FAADC"/>
<rect x="703.8" y="214.4" width="11" height="12.8" fill="#2F5597"/>
<rect x="703.8" y="227.2" width="11" height="12.8" fill="#203864"/>
<rect x="720.8" y="158.5" width="11" height="11" fill="#ED7D31"/>
<rect x="720.8" y="176.0" width="11" height="12.8" fill="#FBE5D6"/>
<rect x="720.8" y="188.8" width="11" height="12.8" fill="#F8CBAD"/>
<rect x="720.8" y="201.6" width="11" height="12.8" fill="#F4B183"/>
<rect x="720.8" y="214.4" width="11" height="12.8" fill="#C55A11"/>
<rect x="720.8" y="227.2" width="11" height="12.8" fill="#843C0C"/>
<rect x="737.8" y="158.5" width="11" height="11" fill="#A5A5A5"/>
<rect x="737.8" y="176.0" width="11" height="12.8" fill="#EDEDED"/>
<rect x="737.8" y="188.8" width="11" height="12.8" fill="#DBDBDB"/>
<rect x="737.8" y="201.6" width="11" height="12.8" fill="#C9C9C9"/>
<rect x="737.8" y="214.4" width="11" height="12.8" fill="#7B7B7B"/>
<rect x="737.8" y="227.2" width="11" height="12.8" fill="#525252"/>
<rect x="754.8" y="158.5" width="11" height="11" fill="#FFC000"/>
<rect x="754.8" y="176.0" width="11" height="12.8" fill="#FFF2CC"/>
<rect x="754.8" y="188.8" width="11" height="12.8" fill="#FFE699"/>
<rect x="754.8" y="201.6" width="11" height="12.8" fill="#FFD966"/>
<rect x="754.8" y="214.4" width="11" height="12.8" fill="#BF9000"/>
<rect x="754.8" y="227.2" width="11" height="12.8" fill="#7F6000"/>
<rect x="771.8" y="158.5" width="11" height="11" fill="#5B9BD5"/>
<rect x="771.8" y="176.0" width="11" height="12.8" fill="#DEEBF7"/>
<rect x="771.8" y="188.8" width="11" height="12.8" fill="#BDD7EE"/>
<rect x="771.8" y="201.6" width="11" height="12.8" fill="#9DC3E6"/>
<rect x="771.8" y="214.4" width="11" height="12.8" fill="#2E75B6"/>
<rect x="771.8" y="227.2" width="11" height="12.8" fill="#1F4E79"/>
<rect x="788.8" y="158.5" width="11" height="11" fill="#70AD47"/>
<rect x="788.8" y="176.0" width="11" height="12.8" fill="#E2F0D9"/>
<rect x="788.8" y="188.8" width="11" height="12.8" fill="#C5E0B4"/>
<rect x="788.8" y="201.6" width="11" height="12.8" fill="#A9D18E"/>
<rect x="788.8" y="214.4" width="11" height="12.8" fill="#548235"/>
<rect x="788.8" y="227.2" width="11" height="12.8" fill="#385723"/>
<rect x="635.8" y="270" width="11" height="11" fill="#C00000"/>
<rect x="652.8" y="270" width="11" height="11" fill="#FF0000"/>
<rect x="669.8" y="270" width="11" height="11" fill="#FFC000"/>
<rect x="686.8" y="270" width="11" height="11" fill="#FFFF00"/>
<rect x="703.8" y="270" width="11" height="11" fill="#92D050"/>
<rect x="720.8" y="270" width="11" height="11" fill="#00B050"/>
<rect x="737.8" y="270" width="11" height="11" fill="#00B0F0"/>
<rect x="754.8" y="270" width="11" height="11" fill="#0070C0"/>
<rect x="771.8" y="270" width="11" height="11" fill="#002060"/>
<rect x="788.8" y="270" width="11" height="11" fill="#7030A0"/>
<rect x="788.7" y="176.8" width="11.6" height="11.6" fill="none" stroke="#f3a553" stroke-width="1.4"/>
<rect x="790.0" y="178.1" width="9.0" height="9" fill="none" stroke="#fde7b0" stroke-width="0.9"/>
<rect x="635.5" y="286.5" width="19" height="19" fill="#c8c8c8" stroke="#8c8c8c"/>
<rect x="637" y="288" width="16" height="16" fill="none" stroke="#f4f4f4" stroke-width="1"/>
<rect x="633" y="308" width="171" height="1" fill="#e1e1e1"/>
<path d="M644.5 321.3L644.50 313.90A7.4 7.4 0 0 1 651.54 319.01Z" fill="#e8a25a" stroke="#fff" stroke-width="0.9"/>
<path d="M644.5 321.3L651.54 319.01A7.4 7.4 0 0 1 648.85 327.29Z" fill="#6fa088" stroke="#fff" stroke-width="0.9"/>
<path d="M644.5 321.3L648.85 327.29A7.4 7.4 0 0 1 640.15 327.29Z" fill="#3d7fc6" stroke="#fff" stroke-width="0.9"/>
<path d="M644.5 321.3L640.15 327.29A7.4 7.4 0 0 1 637.46 319.01Z" fill="#d3583b" stroke="#fff" stroke-width="0.9"/>
<path d="M644.5 321.3L637.46 319.01A7.4 7.4 0 0 1 644.50 313.90Z" fill="#e07b39" stroke="#fff" stroke-width="0.9"/>
<rect x="665.5" y="301" width="7.5" height="1" fill="#444"/>
<rect x="665.5" y="327" width="10" height="1" fill="#444"/>
</svg>
<div class="a" style="left:797px;top:198px;width:157px;height:24px;background:#fff;border:1px solid #c6c6c6;box-shadow:1px 1px 1px rgba(0,0,0,0.08)"></div>
<div class="t" style="left:641.40px;top:138.94px;font-size:12.3px;line-height:12.3px;color:#5a5a5a;font-weight:bold;transform:scaleX(0.9690)">Themakleuren</div>
<div class="t" style="left:640.90px;top:250.34px;font-size:12.3px;line-height:12.3px;color:#5a5a5a;font-weight:bold;transform:scaleX(0.9568)">Standaardkleuren</div>
<div class="t" style="left:665.20px;top:290.39px;font-size:12.6px;line-height:12.6px;color:#505050;font-weight:normal;transform:scaleX(0.9135)">Geen kleur</div>
<div class="t" style="left:664.26px;top:315.99px;font-size:12.6px;line-height:12.6px;color:#505050;font-weight:normal;transform:scaleX(0.9395)">Meer kleuren...</div>
<div class="t" style="left:801.80px;top:206.08px;font-size:11.2px;line-height:11.2px;color:#575757;font-weight:normal;transform:scaleX(1.0333)">Groen, Accent 6, lichter 80%</div>
<svg style="left:0;top:0" width="1177" height="610" viewBox="0 0 1177 610"><path d="M796.5 185.5v16l3.8-3.6l2.6 6l2.6-1.1l-2.5-5.8h5.2z" fill="#fff" stroke="#000" stroke-width="1" stroke-linejoin="miter"/></svg>
</body></html>
